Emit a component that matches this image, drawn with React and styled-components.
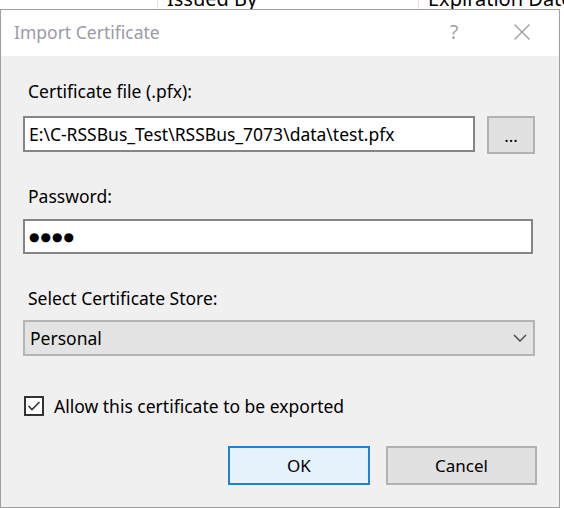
import React from "react";
import styled, { createGlobalStyle } from "styled-components";

const Global = createGlobalStyle`
  html, body { margin: 0; padding: 0; background: #ffffff; }
  body {
    width: 564px;
    height: 508px;
    overflow: hidden;
    font-family: "Noto Sans", "Open Sans", sans-serif;
  }
`;

const Desktop = styled.div`
  position: relative;
  width: 564px;
  height: 508px;
  background: #ffffff;
  overflow: hidden;
`;

/* list header of the certificate manager behind the dialog */
const ListHeader = styled.div`
  display: flex;
  height: 9px;
  overflow: hidden;
  background: #ffffff;
`;

const HeaderCell = styled.div`
  width: ${(p) => (p.$w ? `${p.$w}px` : "auto")};
  flex: ${(p) => (p.$w ? "none" : "1")};
  border-left: ${(p) => (p.$sep ? "1px solid #e5e5e5" : "none")};
  padding-left: 9px;
  box-sizing: border-box;
  margin-top: -13px;
  font-size: 20px;
  line-height: 24px;
  color: #000;
  white-space: nowrap;
  overflow: hidden;
`;

const Dialog = styled.div`
  position: absolute;
  left: 0;
  top: 9px;
  width: 560px;
  height: 499px;
  box-sizing: border-box;
  border: 1px solid #a0a0a0;
  background: #f0f0f0;
  display: flex;
  flex-direction: column;
`;

const TitleBar = styled.div`
  height: 46px;
  flex: none;
  box-sizing: border-box;
  padding: 0 0 3px 13px;
  background: #ffffff;
  display: flex;
  align-items: center;
`;

const Title = styled.div`
  flex: 1;
  font-size: 17.5px;
  color: #9c9aa6;
`;

const Caption = styled.div`
  width: ${(p) => p.$w}px;
  display: flex;
  align-items: center;
  justify-content: center;
  color: #a0a0a0;
  font-size: 19px;
`;

const Body = styled.div`
  flex: 1;
  display: flex;
  flex-direction: column;
  padding: 24px 0 0 22px;
`;

const Label = styled.div`
  padding-left: 5px;
  font-size: 17.5px;
  line-height: 22px;
  color: #000;
  margin-bottom: ${(p) => p.$mb}px;
`;

const Row = styled.div`
  display: flex;
  align-items: flex-start;
  gap: 12px;
  margin-bottom: ${(p) => p.$mb}px;
`;

const TextBox = styled.div`
  width: ${(p) => p.$w}px;
  height: ${(p) => p.$h}px;
  box-sizing: border-box;
  border: 2px solid #858585;
  background: #ffffff;
  display: flex;
  align-items: center;
  padding-left: 4px;
  font-size: 17.5px;
  color: #000;
  white-space: nowrap;
`;

const Dots = styled.span`
  font-size: 12px;
  letter-spacing: 1px;
  font-family: "DejaVu Sans", sans-serif;
`;

const Button = styled.div`
  width: ${(p) => p.$w}px;
  height: ${(p) => p.$h}px;
  box-sizing: border-box;
  border: 2px solid ${(p) => (p.$primary ? "#1e83d8" : "#b2b2b2")};
  background: ${(p) => (p.$primary ? "#e5f1fb" : "#e1e1e1")};
  display: flex;
  align-items: center;
  justify-content: center;
  font-size: 17px;
  color: #000;
`;

const Combo = styled.div`
  width: 512px;
  height: 36px;
  box-sizing: border-box;
  border: 2px solid #b4b4b4;
  background: #e3e3e3;
  display: flex;
  align-items: center;
  padding: 0 6px 0 5px;
  font-size: 17.5px;
  color: #000;
  margin-bottom: 38px;
`;

const ComboText = styled.span`
  flex: 1;
`;

const CheckRow = styled.label`
  display: flex;
  align-items: center;
  gap: 10px;
  padding-left: 1px;
  font-size: 17.5px;
  color: #000;
  margin-bottom: 28px;
`;

const CheckBox = styled.span`
  width: 20px;
  height: 20px;
  box-sizing: border-box;
  border: 2px solid #333333;
  background: #ffffff;
  display: flex;
  align-items: center;
  justify-content: center;
`;

const Footer = styled.div`
  display: flex;
  gap: 16px;
  padding-left: 205px;
`;

export default function App() {
  return (
    <Desktop>
      <Global />
      <ListHeader>
        <HeaderCell $w={157} />
        <HeaderCell $w={261} $sep>Issued By</HeaderCell>
        <HeaderCell $sep>Expiration Date</HeaderCell>
      </ListHeader>

      <Dialog>
        <TitleBar>
          <Title>Import Certificate</Title>
          <Caption $w={62}>?</Caption>
          <Caption $w={74}>
            <svg width="18" height="18" viewBox="0 0 18 18">
              <path d="M1.5 1.5 L16.5 16.5 M16.5 1.5 L1.5 16.5" stroke="#9a9a9a" strokeWidth="1.3" fill="none" />
            </svg>
          </Caption>
        </TitleBar>

        <Body>
          <Label $mb={14}>Certificate file (.pfx):</Label>
          <Row $mb={31}>
            <TextBox $w={452} $h={36}>E:\C-RSSBus_Test\RSSBus_7073\data\test.pfx</TextBox>
            <Button $w={48} $h={38}>...</Button>
          </Row>

          <Label $mb={12}>Password:</Label>
          <Row $mb={33}>
            <TextBox $w={510} $h={35}>
              <Dots>●●●●</Dots>
            </TextBox>
          </Row>

          <Label $mb={11}>Select Certificate Store:</Label>
          <Combo>
            <ComboText>Personal</ComboText>
            <svg width="14" height="8" viewBox="0 0 14 8">
              <path d="M1 1 L7 7 L13 1" stroke="#444" strokeWidth="1.4" fill="none" />
            </svg>
          </Combo>

          <CheckRow>
            <CheckBox>
              <svg width="14" height="12" viewBox="0 0 14 12">
                <path d="M1.5 6 L5 9.5 L12.5 2" stroke="#333" strokeWidth="1.6" fill="none" />
              </svg>
            </CheckBox>
            Allow this certificate to be exported
          </CheckRow>

          <Footer>
            <Button $w={142} $h={39} $primary>OK</Button>
            <Button $w={151} $h={39}>Cancel</Button>
          </Footer>
        </Body>
      </Dialog>
    </Desktop>
  );
}
